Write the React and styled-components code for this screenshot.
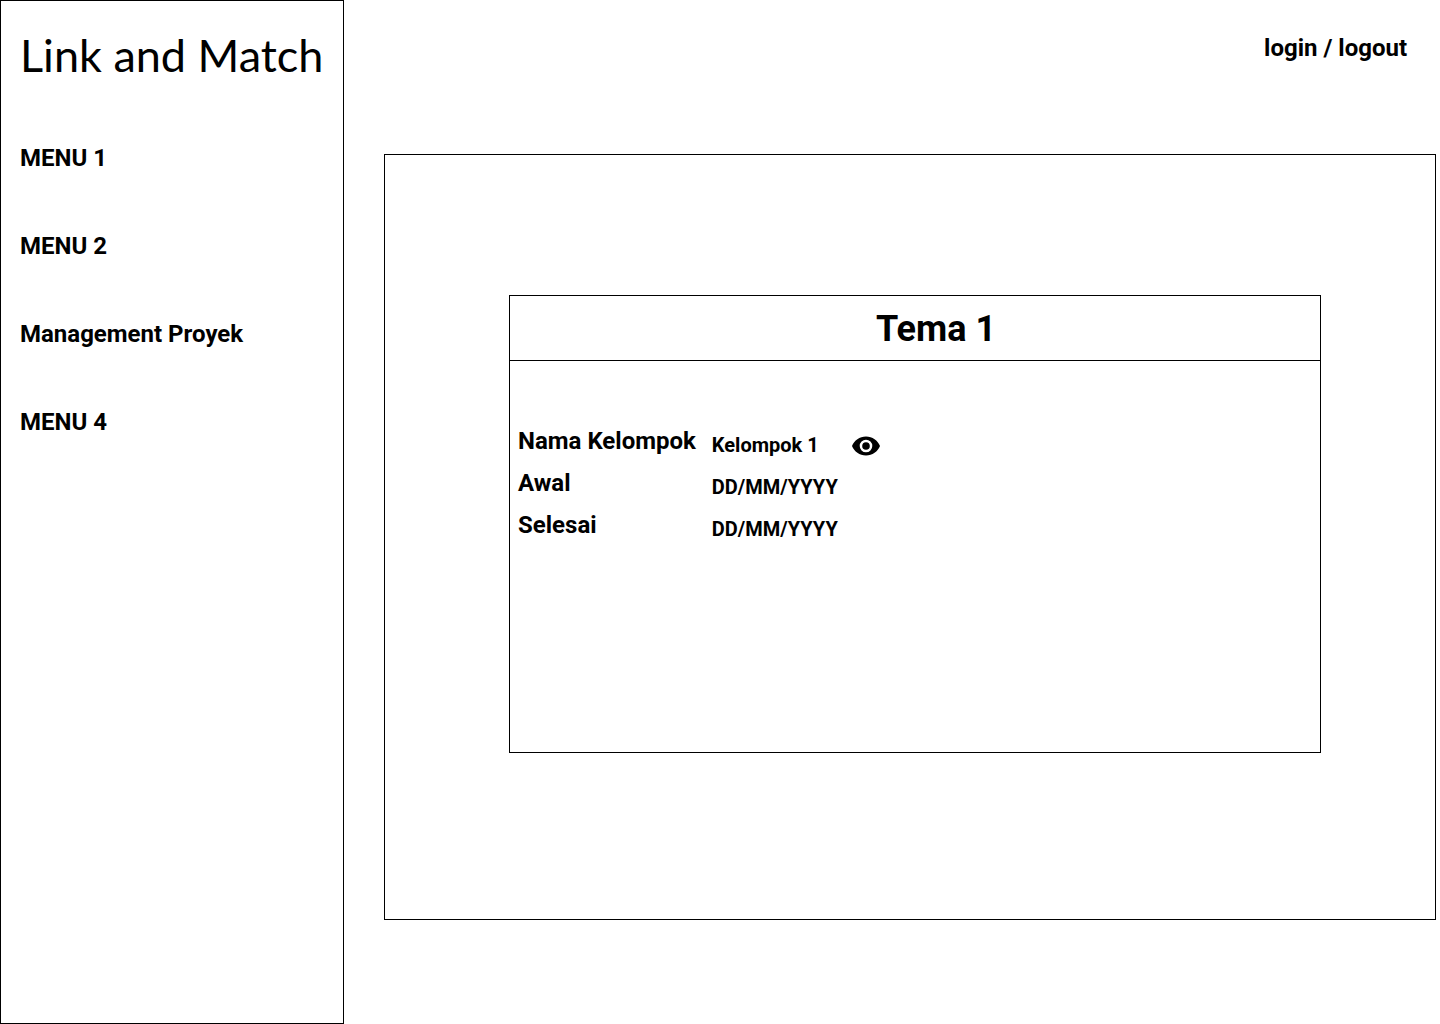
import React from "react";
import styled, { createGlobalStyle } from "styled-components";

const GlobalStyle = createGlobalStyle`
  *, *::before, *::after { box-sizing: border-box; }
  body {
    margin: 0;
    background: #fff;
    color: #000;
    font-family: Roboto, "Liberation Sans", sans-serif;
  }
`;

const Page = styled.div`
  display: flex;
  min-height: 100vh;
`;

const Sidebar = styled.aside`
  flex: 0 0 344px;
  padding: 26px 19px;
  border: 1px solid #000;
`;

const Brand = styled.div`
  font-family: Lato, "Open Sans", sans-serif;
  font-size: 45px;
  line-height: 56px;
  font-weight: 400;
  white-space: nowrap;
`;

const Menu = styled.nav`
  display: flex;
  flex-direction: column;
  align-items: flex-start;
  gap: 60px;
  margin-top: 61px;
`;

const TextLink = styled.a`
  color: inherit;
  font-size: 24px;
  line-height: 28px;
  font-weight: 700;
  text-decoration: none;
`;

const Content = styled.div`
  flex: 1;
  display: flex;
  flex-direction: column;
  padding: 34px 4px 104px 40px;
`;

const TopBar = styled.header`
  display: flex;
  justify-content: flex-end;
  padding-right: 29px;
`;

const Panel = styled.main`
  flex: 1;
  display: flex;
  flex-direction: column;
  margin-top: 92px;
  padding: 140px 114px 166px 124px;
  border: 1px solid #000;
`;

const Card = styled.section`
  flex: 1;
  border: 1px solid #000;
`;

const CardTitle = styled.h1`
  margin: 0;
  padding: 12px 0 10px 42px;
  border-bottom: 1px solid #000;
  font-size: 36px;
  line-height: 42px;
  font-weight: 700;
  text-align: center;
`;

const Details = styled.dl`
  display: grid;
  grid-template-columns: max-content 1fr;
  column-gap: 16px;
  row-gap: 14px;
  margin: 0;
  padding: 66px 8px;
`;

const Label = styled.dt`
  font-size: 24px;
  line-height: 28px;
  font-weight: 700;
`;

const Value = styled.dd`
  display: flex;
  align-items: center;
  gap: 32px;
  height: 28px;
  margin: 0;
  padding-top: 8px;
  font-size: 20px;
  line-height: 20px;
  font-weight: 700;
`;

const IconButton = styled.button`
  display: flex;
  padding: 0;
  border: 0;
  background: none;
  color: inherit;
  cursor: pointer;
`;

const menu = ["MENU 1", "MENU 2", "Management Proyek", "MENU 4"];

function EyeIcon() {
  return (
    <svg width="30" height="22" viewBox="0 -2 30 22" fill="currentColor" aria-hidden="true">
      <path
        fillRule="evenodd"
        d="M15 .5C8.600.5 3.200 4.400 1 10c2.200 5.600 7.600 9.500 14 9.500s11.800-3.900 14-9.500C26.800 4.400 21.400.5 15 .5Zm0 15.800a6.300 6.300 0 1 1 0-12.600 6.300 6.300 0 0 1 0 12.600Zm0-10.100a3.800 3.800 0 1 0 0 7.600 3.800 3.800 0 0 0 0-7.600Z"
      />
    </svg>
  );
}

export default function App() {
  return (
    <>
      <GlobalStyle />
      <Page>
        <Sidebar>
          <Brand>Link and Match</Brand>
          <Menu>
            {menu.map((item) => (
              <TextLink key={item} href="#">{item}</TextLink>
            ))}
          </Menu>
        </Sidebar>
        <Content>
          <TopBar>
            <TextLink href="#">login / logout</TextLink>
          </TopBar>
          <Panel>
            <Card>
              <CardTitle>Tema 1</CardTitle>
              <Details>
                <Label>Nama Kelompok</Label>
                <Value>
                  Kelompok 1
                  <IconButton type="button" aria-label="Lihat kelompok">
                    <EyeIcon />
                  </IconButton>
                </Value>
                <Label>Awal</Label>
                <Value>DD/MM/YYYY</Value>
                <Label>Selesai</Label>
                <Value>DD/MM/YYYY</Value>
              </Details>
            </Card>
          </Panel>
        </Content>
      </Page>
    </>
  );
}
